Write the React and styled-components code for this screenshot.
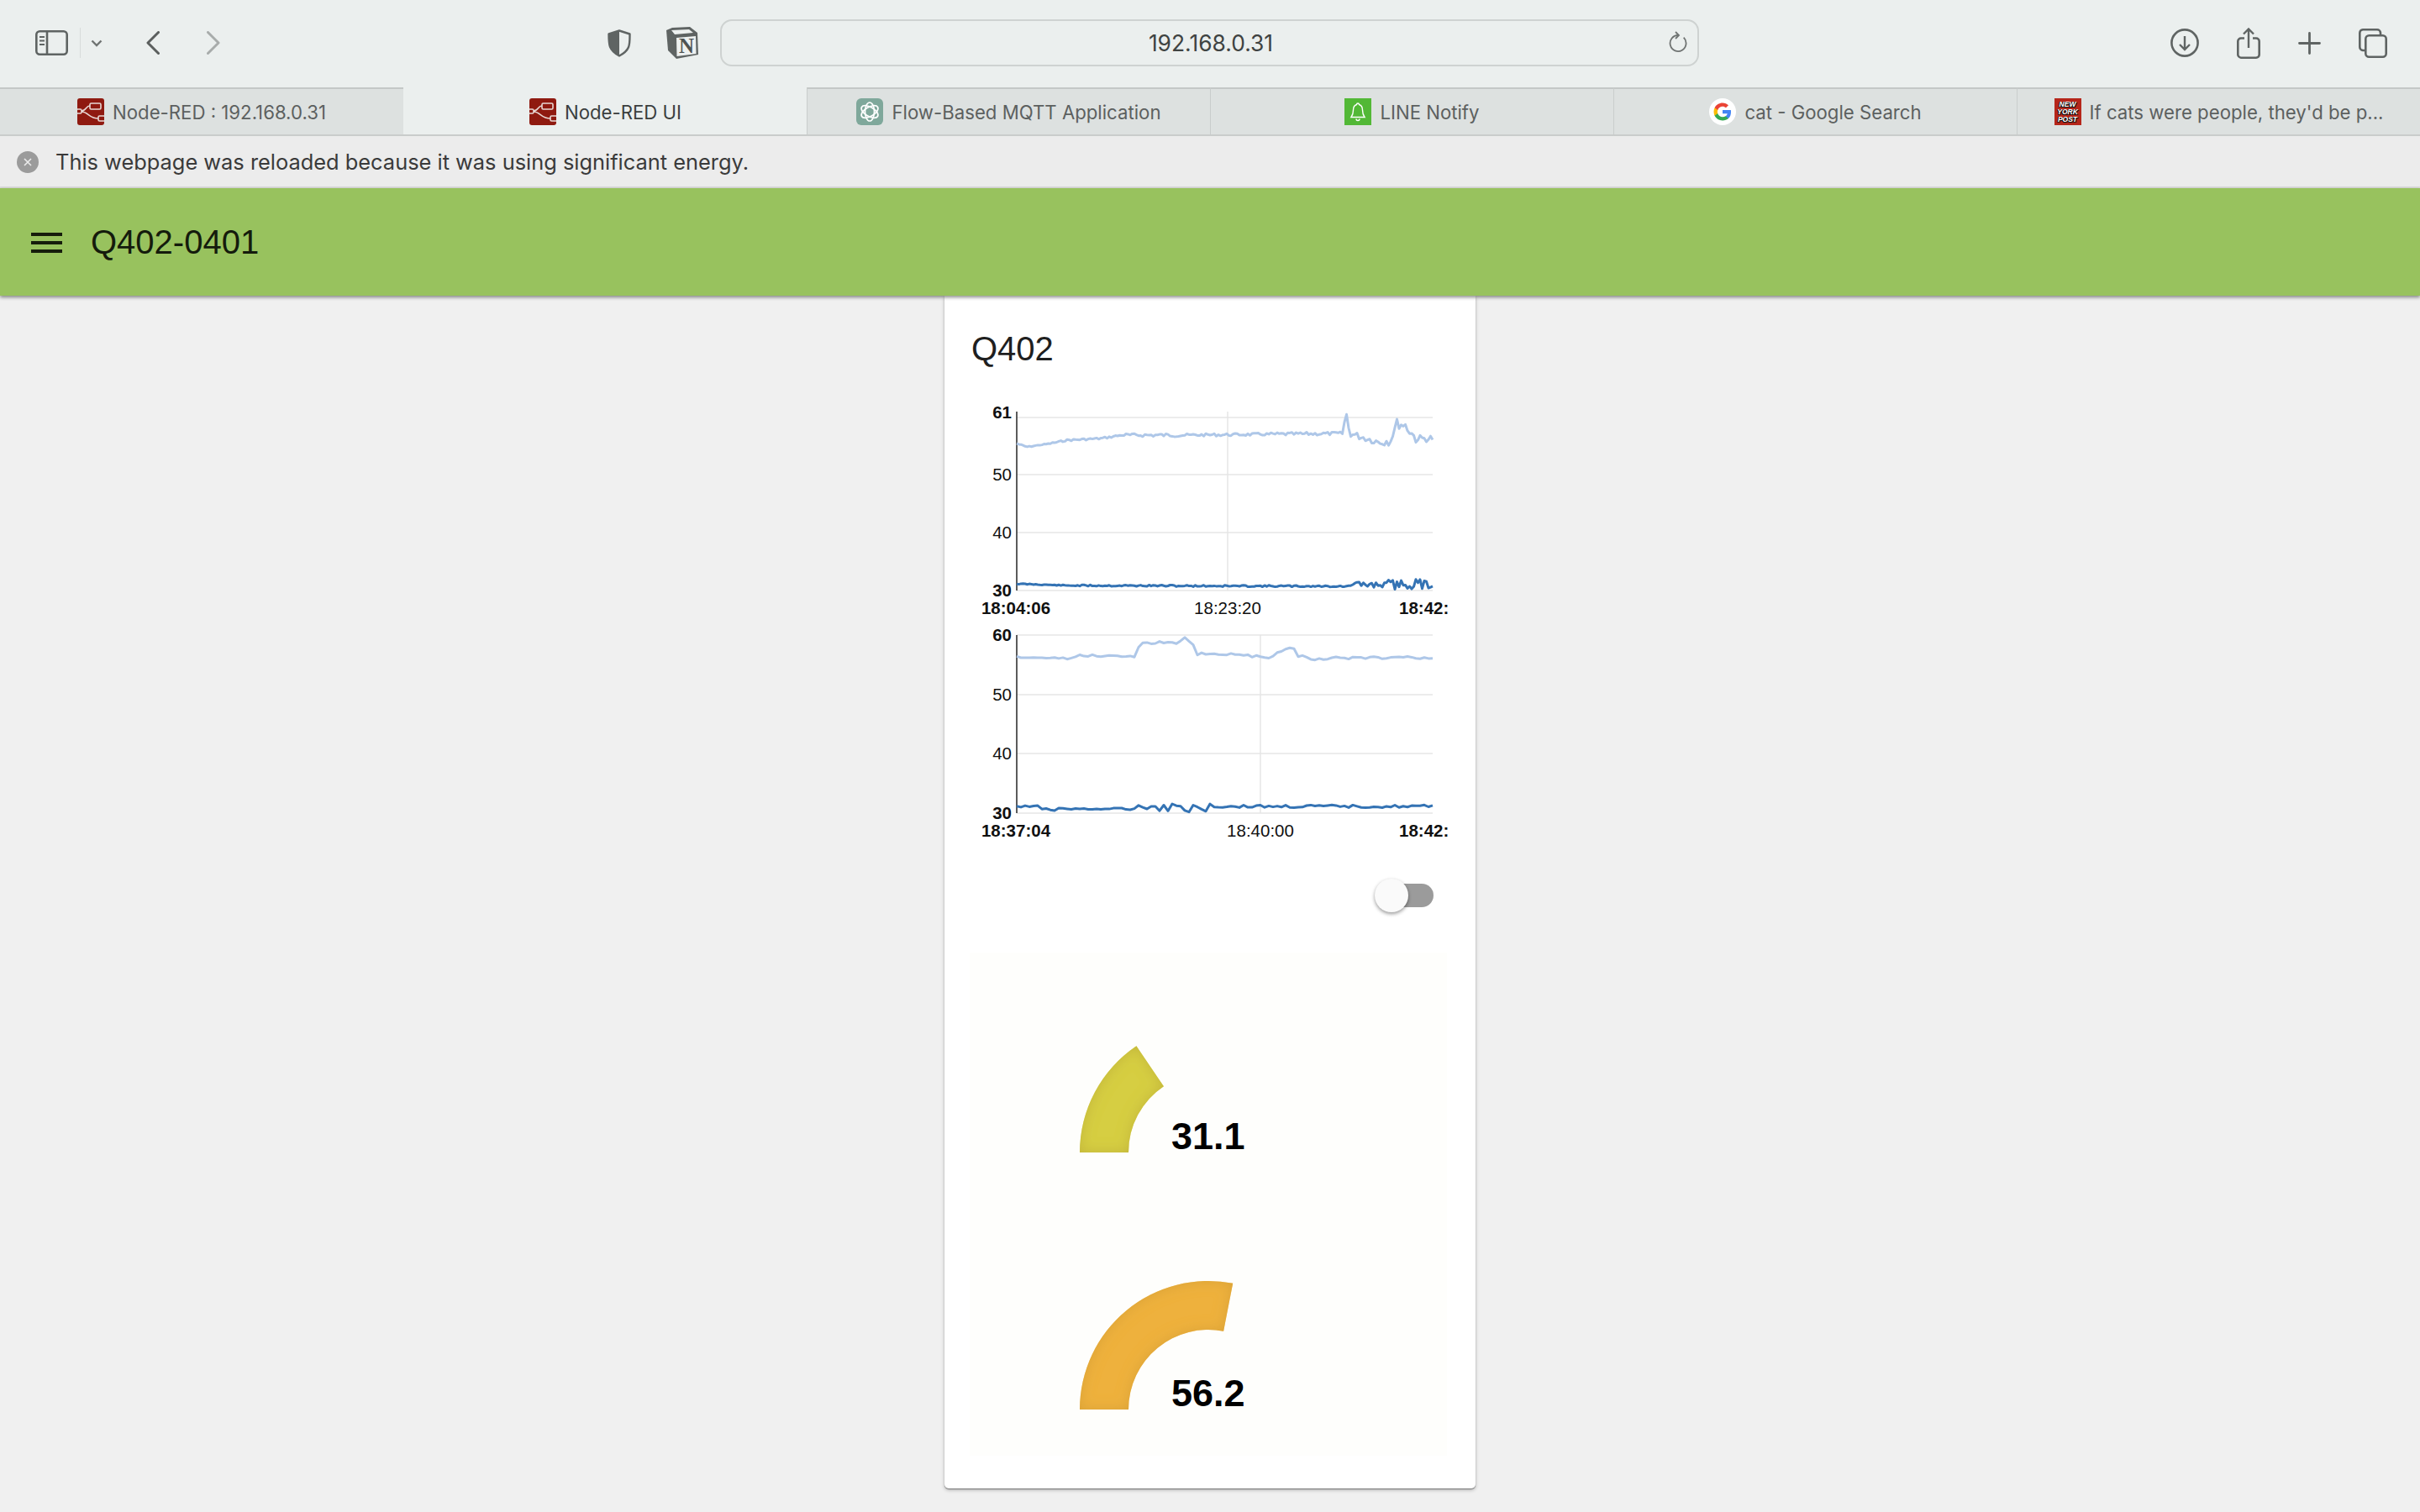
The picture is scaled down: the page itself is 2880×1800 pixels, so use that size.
import React from 'react'
import styled, { createGlobalStyle } from 'styled-components'

const GlobalStyle = createGlobalStyle`
  html, body { margin: 0; padding: 0; background: #f0f0f0; }
  body { font-family: "Liberation Sans", Arial, sans-serif; }
`

// the series are anchors plus seeded noise, the real data is far too long to write out
const noise = (seed) => {
  let s = seed
  return () => {
    s = (s * 9301 + 49297) % 233280
    return s / 233280 - 0.5
  }
}

const makeSeries = (anchors, step, amp, seed) => {
  const rnd = noise(seed)
  const out = []
  for (let x = 0; x <= 495; x += step) {
    const i = Math.max(0, anchors.findIndex((a, n) => anchors[n + 1] && x >= a[0] && x <= anchors[n + 1][0]))
    const [x0, y0, k = 1] = anchors[i]
    const [x1, y1] = anchors[i + 1]
    const y = y0 + ((y1 - y0) * (x - x0)) / (x1 - x0)
    out.push(`${x},${(y + rnd() * amp * k).toFixed(1)}`)
  }
  return out.join(' ')
}

const topSeries1 = makeSeries(
  [[0, 52, 0.3], [12, 56, 0.3], [40, 52, 0.5], [60, 48, 0.6], [100, 46, 0.6], [125, 42, 1], [200, 42, 0.8], [300, 41, 1], [388, 40, 2], [392, 14, 0], [396, 40, 2], [430, 50, 3], [445, 48, 2], [452, 28, 3], [462, 30, 3], [475, 46, 2], [495, 46, 1]],
  2.5, 4, 7
)
const lowSeries1 = makeSeries(
  [[0, 219, 0.5], [60, 221, 0.8], [395, 222, 0.4], [400, 220, 3], [440, 220, 5], [495, 219, 1]],
  2.5, 2.4, 11
)
const topSeries2 = makeSeries(
  [[0, 40, 0.5], [60, 42, 0.5], [76, 38, 1], [100, 38, 0.4], [142, 40, 0.4], [146, 24, 1], [199, 22, 3], [218, 35, 1], [300, 40, 1], [321, 30, 2], [350, 42, 1], [495, 40, 0.3]],
  5, 4, 23
)
const lowSeries2 = makeSeries(
  [[0, 218, 1], [50, 221, 0.4], [140, 221, 0], [144, 217, 2.2], [220, 220, 2.4], [230, 218, 0.7], [495, 218, 0.2]],
  5, 5, 31
)

const polar = (cx, cy, r, deg) => {
  const a = (deg * Math.PI) / 180
  return [cx - r * Math.cos(a), cy - r * Math.sin(a)]
}

const arcPath = (deg) => {
  const cx = 153, cy = 153, R = 153, r = 95
  const [ax, ay] = polar(cx, cy, R, 0)
  const [bx, by] = polar(cx, cy, R, deg)
  const [c, d] = polar(cx, cy, r, deg)
  const [e, f] = polar(cx, cy, r, 0)
  return `M${ax} ${ay}A${R} ${R} 0 0 1 ${bx.toFixed(1)} ${by.toFixed(1)}L${c.toFixed(1)} ${d.toFixed(1)}A${r} ${r} 0 0 0 ${e} ${f}Z`
}

const tabs = [
  { title: 'Node-RED : 192.168.0.31', icon: 'red' },
  { title: 'Node-RED UI', icon: 'red', active: true },
  { title: 'Flow-Based MQTT Application', icon: 'gpt' },
  { title: 'LINE Notify', icon: 'line' },
  { title: 'cat - Google Search', icon: 'google' },
  { title: "If cats were people, they'd be p...", icon: 'nyp' },
]

const TabIcon = ({ kind }) => {
  if (kind === 'red') {
    return (
      <Favicon viewBox="0 0 32 32">
        <rect width="32" height="32" rx="3" fill="#8f1a10" />
        <rect x="15" y="6" width="13" height="7" rx="1.5" fill="none" stroke="#e8d8d4" strokeWidth="1.6" />
        <rect x="-1" y="13" width="6" height="5" rx="1.5" fill="none" stroke="#e8d8d4" strokeWidth="1.6" />
        <rect x="25" y="21" width="8" height="6" rx="1.5" fill="none" stroke="#e8d8d4" strokeWidth="1.6" />
        <path d="M5 15c6 0 5-6 10-6M5 16c8 0 9 8 20 8" fill="none" stroke="#e8d8d4" strokeWidth="1.6" />
      </Favicon>
    )
  }
  if (kind === 'gpt') {
    return (
      <Favicon viewBox="0 0 32 32">
        <rect width="32" height="32" rx="6" fill="#7fa89b" />
        <g fill="none" stroke="#fff" strokeWidth="1.7">
          <ellipse cx="16" cy="16" rx="5.5" ry="11" />
          <ellipse cx="16" cy="16" rx="5.5" ry="11" transform="rotate(60 16 16)" />
          <ellipse cx="16" cy="16" rx="5.5" ry="11" transform="rotate(120 16 16)" />
        </g>
      </Favicon>
    )
  }
  if (kind === 'line') {
    return (
      <Favicon viewBox="0 0 32 32">
        <rect width="32" height="32" fill="#52b836" />
        <path d="M16 6c-1 0-1.5.6-1.5 1.5C11.5 8.5 10.500 11 10.500 14c0 4-1 6.500-2.500 8.500h16c-1.500-2-2.500-4.500-2.500-8.500 0-3-1-5.500-4-6.500C17.500 6.600 17 6 16 6z" fill="none" stroke="#fff" strokeWidth="1.4" />
        <path d="M14 24.500a2 2 0 0 0 4 0" fill="none" stroke="#fff" strokeWidth="1.4" />
      </Favicon>
    )
  }
  if (kind === 'google') {
    return (
      <Favicon viewBox="0 0 32 32">
        <circle cx="16" cy="16" r="16" fill="#fff" />
        <path d="M26 16.300c0-.8-.1-1.500-.2-2.200H16v4.100h5.700c-.3 1.300-1 2.400-2.200 3.200v2.700h3.500c2-1.900 3-4.600 3-7.800z" fill="#4285f4" />
        <path d="M16 26.500c2.800 0 5.200-.9 7-2.500l-3.500-2.700c-.9.600-2.100 1-3.500 1-2.700 0-5-1.800-5.800-4.300H6.600v2.800c1.700 3.400 5.300 5.700 9.400 5.700z" fill="#34a853" />
        <path d="M10.200 18c-.2-.6-.3-1.300-.3-2s.1-1.400.3-2v-2.800H6.600C5.900 12.600 5.500 14.300 5.500 16s.4 3.400 1.100 4.800z" fill="#fbbc05" />
        <path d="M16 9.700c1.500 0 2.900.5 4 1.600l3-3c-1.800-1.700-4.200-2.800-7-2.800-4.100 0-7.700 2.300-9.400 5.700l3.600 2.800c.8-2.500 3.100-4.300 5.800-4.300z" fill="#ea4335" />
      </Favicon>
    )
  }
  return (
    <NypBadge>
      <span>NEW</span>
      <span>YORK</span>
      <span>POST</span>
    </NypBadge>
  )
}

const LineChart = ({ maxLabel, maxShift, grid, vx, startLabel, midLabel, top, low }) => (
  <ChartBox>
    <svg width="560" height="266" viewBox="0 0 560 266">
      <g stroke="#e6e6e6" strokeWidth="1.5">
        {grid.lines.map((y) => (
          <line key={y} x1="40" x2="535" y1={y} y2={y} />
        ))}
        <line x1={vx} x2={vx} y1={grid.top} y2={grid.bottom} />
      </g>
      <line x1="40" x2="40" y1={grid.top} y2={grid.bottom} stroke="#333" strokeWidth="1.6" />
      <g transform="translate(40 0)" fill="none" strokeLinejoin="round">
        <polyline points={top} stroke="#aec7e8" strokeWidth="3" />
        <polyline points={low} stroke="#3473b4" strokeWidth="3" />
      </g>
      <g fontFamily="Liberation Sans" fontSize="20.5" fill="#111" textAnchor="end">
        <text x="34" y={grid.lines[0] + maxShift} fontWeight="700">{maxLabel}</text>
        <text x="34" y={grid.lines[1] + 7}>50</text>
        <text x="34" y={grid.lines[2] + 7}>40</text>
        <text x="34" y={grid.bottom + 7} fontWeight="700">30</text>
      </g>
      <g fontFamily="Liberation Sans" fontSize="20.5" fill="#111" textAnchor="middle">
        <text x="39" y={grid.bottom + 28} fontWeight="700">{startLabel}</text>
        <text x={vx} y={grid.bottom + 28}>{midLabel}</text>
        <text x="495" y={grid.bottom + 28} fontWeight="700" textAnchor="start">18:42:</text>
      </g>
    </svg>
  </ChartBox>
)

const Gauge = ({ deg, color, edge, id, value, offset }) => (
  <GaugeRow $offset={offset}>
    <svg width="306" height="154" viewBox="0 0 306 154">
      <defs>
        <filter id={id} x="-5%" y="-5%" width="110%" height="110%">
          <feGaussianBlur in="SourceAlpha" stdDeviation="8" result="blur" />
          <feComposite in="SourceAlpha" in2="blur" operator="out" result="rim" />
          <feFlood floodColor={edge} />
          <feComposite in2="rim" operator="in" result="shade" />
          <feMerge>
            <feMergeNode in="SourceGraphic" />
            <feMergeNode in="shade" />
          </feMerge>
        </filter>
      </defs>
      <path d={arcPath(deg)} fill={color} filter={`url(#${id})`} />
    </svg>
    <GaugeValue>{value}</GaugeValue>
  </GaugeRow>
)

export default function App() {
  return (
    <Page>
      <GlobalStyle />
      <Toolbar>
        <LeftTools>
          <SidebarIcon width="39" height="30" viewBox="0 0 39 30" fill="none" stroke="#5f6463" strokeWidth="2.6">
            <rect x="1.3" y="1.3" width="36.4" height="27.4" rx="4" />
            <line x1="14" x2="14" y1="1" y2="29" />
            <path d="M5 8h6M5 12.500h6M5 17h6" strokeWidth="2" />
          </SidebarIcon>
          <Divider />
          <SmallChevron width="14" height="9" viewBox="0 0 14 9" fill="none" stroke="#6f7372" strokeWidth="2.4"><path d="M1.500 1.500L7 7l5.500-5.500" /></SmallChevron>
          <NavIcon viewBox="0 0 16 28" stroke="#5b5f5e" $gap={52}><path d="M14.500 1.500L2 14l12.500 12.500" /></NavIcon>
          <NavIcon viewBox="0 0 16 28" stroke="#a8acab" $gap={56}><path d="M1.500 1.500L14 14 1.500 26.500" /></NavIcon>
        </LeftTools>
        <MidTools>
          <svg width="28" height="33" viewBox="0 0 28 33">
            <path d="M14 1.500l12.500 4c0 13 .5 19-12.500 26C1.500 24.500 1.500 18.500 1.500 5.500z" fill="none" stroke="#5f6463" strokeWidth="2.4" strokeLinejoin="round" />
            <path d="M14 1.500l-12.500 4c0 13 0 19 12.500 26z" fill="#5f6463" />
          </svg>
          <svg width="38" height="38" viewBox="0 0 38 38">
            <path d="M7 1l21-1 9 7 1 26-26 5-10-10L0 4z" fill="#5f6463" />
            <path d="M6 4l21-1 5 4-22 2zM12 13l23-2 .5 21-23 3z" fill="#eef1f0" />
            <NotionN x="24" y="31">N</NotionN>
          </svg>
        </MidTools>
        <AddressBar>
          <AddressText>192.168.0.31</AddressText>
          <Reload viewBox="0 0 22 25" fill="none" stroke="#6f7372" strokeWidth="1.8">
            <path d="M17.700 7.700A9.500 9.500 0 1 1 11 5" />
            <path d="M8 1l4 4-4 4" />
          </Reload>
        </AddressBar>
        <RightTools>
          <svg width="34" height="34" viewBox="0 0 34 34" fill="none" stroke="#5f6463" strokeWidth="2.6">
            <circle cx="17" cy="17" r="15.600" />
            <path d="M17 9v16M11 19l6 6 6-6" strokeWidth="2.400" />
          </svg>
          <svg width="28" height="37" viewBox="0 0 28 37" fill="none" stroke="#5f6463" strokeWidth="2.6">
            <path d="M9 12.500H5a3.700 3.700 0 0 0-3.700 3.700v15.100A4 4 0 0 0 5 35.700h18a3.700 3.700 0 0 0 3.700-3.700V16.200a3.700 3.700 0 0 0-3.700-3.700h-4" />
            <path d="M14 24V2M8 7.500L14 1.500l6 6" strokeWidth="2.400" />
          </svg>
          <svg width="27" height="27" viewBox="0 0 27 27" stroke="#5f6463" strokeWidth="2.8" strokeLinecap="round"><path d="M13.500 1.500v24M1.500 13.500h24" /></svg>
          <svg width="34" height="35" viewBox="0 0 34 35" fill="none" stroke="#5f6463" strokeWidth="2.6">
            <path d="M7 26H5a4 4 0 0 1-3.700-4V5A4 4 0 0 1 5 1.300h17A4 4 0 0 1 26 5v2" />
            <rect x="8.300" y="8.300" width="24.400" height="25.400" rx="4" />
          </svg>
        </RightTools>
      </Toolbar>
      <TabStrip>
        {tabs.map((t) => (
          <Tab key={t.title} $active={t.active}>
            <TabIcon kind={t.icon} />
            <TabTitle $active={t.active}>{t.title}</TabTitle>
          </Tab>
        ))}
      </TabStrip>
      <NoticeBar>
        <CloseDot>
          <svg width="10" height="10" viewBox="0 0 10 10" stroke="#ececec" strokeWidth="1.6"><path d="M1 1l8 8M9 1l-8 8" /></svg>
        </CloseDot>
        <NoticeText>This webpage was reloaded because it was using significant energy.</NoticeText>
      </NoticeBar>
      <AppBar>
        <Burger>
          <i /><i /><i />
        </Burger>
        <AppTitle>Q402-0401</AppTitle>
      </AppBar>
      <Content>
        <Card>
          <CardTitle>Q402</CardTitle>
          <LineChart
            maxLabel="61"
            maxShift={1}
            grid={{ top: 14, bottom: 227, lines: [21, 89, 158, 227] }}
            vx={291}
            startLabel="18:04:06"
            midLabel="18:23:20"
            top={topSeries1}
            low={lowSeries1}
          />
          <LineChart
            maxLabel="60"
            maxShift={7}
            grid={{ top: 14, bottom: 226, lines: [14, 85, 155, 226] }}
            vx={330}
            startLabel="18:37:04"
            midLabel="18:40:00"
            top={topSeries2}
            low={lowSeries2}
          />
          <SwitchRow>
            <Switch>
              <SwitchThumb />
            </Switch>
          </SwitchRow>
          <GaugeArea>
            <Gauge id="g1" deg={56} color="#d6ce42" edge="#c2b53c" value="31.1" offset={85} />
            <Gauge id="g2" deg={101} color="#eeb13c" edge="#d9a238" value="56.2" offset={152} />
          </GaugeArea>
        </Card>
      </Content>
    </Page>
  )
}

const Page = styled.div`
  width: 2880px;
  height: 1800px;
  overflow: hidden;
  display: flex;
  flex-direction: column;
  background: #f0f0f0;
`

const Toolbar = styled.div`
  height: 104px;
  flex: none;
  display: flex;
  align-items: center;
  background: #ebefee;
  padding-bottom: 2px;
  box-sizing: border-box;
`

const LeftTools = styled.div`
  width: 723px;
  flex: none;
  display: flex;
  align-items: center;
  padding-left: 42px;
  box-sizing: border-box;
`

const SidebarIcon = styled.svg`
  flex: none;
`

const Divider = styled.span`
  width: 1px;
  height: 36px;
  margin-left: 14px;
  background: #d8dcdb;
`

const SmallChevron = styled.svg`
  margin-left: 12px;
`

const NavIcon = styled.svg`
  width: 16px;
  height: 28px;
  margin-left: ${(p) => p.$gap}px;
  fill: none;
  stroke-width: 3;
  stroke-linecap: round;
  stroke-linejoin: round;
`

const MidTools = styled.div`
  width: 134px;
  flex: none;
  display: flex;
  align-items: center;
  gap: 42px;
`

const NotionN = styled.text`
  font-family: "Liberation Serif", serif;
  font-weight: 700;
  font-size: 25px;
  fill: #4f5352;
  text-anchor: middle;
`

const AddressBar = styled.div`
  width: 1165px;
  height: 56px;
  flex: none;
  position: relative;
  display: flex;
  align-items: center;
  justify-content: center;
  box-sizing: border-box;
  border: 2px solid #ced2d1;
  border-radius: 14px;
  padding-left: 3px;
`

const AddressText = styled.span`
  font-family: Inter, sans-serif;
  font-size: 26.4px;
  color: #3f4342;
`

const Reload = styled.svg`
  position: absolute;
  right: 12px;
  top: 12px;
  width: 22px;
  height: 25px;
`

const RightTools = styled.div`
  flex: 1;
  display: flex;
  align-items: center;
  justify-content: flex-end;
  padding-right: 39px;
  gap: 45px;
`

const TabStrip = styled.div`
  height: 58px;
  flex: none;
  display: grid;
  grid-template-columns: repeat(6, 1fr);
  box-sizing: border-box;
  border-bottom: 2px solid #c9cccb;
`

const Tab = styled.div`
  display: flex;
  align-items: center;
  justify-content: center;
  gap: 10px;
  padding-top: ${(p) => (p.$active ? '2px' : '0')};
  background: ${(p) => (p.$active ? '#ebefee' : '#dde1e0')};
  border-top: ${(p) => (p.$active ? '0' : '2px solid #c4c8c7')};
  border-left: 1px solid ${(p) => (p.$active ? 'transparent' : '#c9cdcc')};
  box-sizing: border-box;
  &:first-child { border-left: 0; }
`

const Favicon = styled.svg`
  width: 32px;
  height: 32px;
  flex: none;
`

const NypBadge = styled.div`
  width: 32px;
  height: 32px;
  flex: none;
  background: #b5261a;
  display: flex;
  flex-direction: column;
  align-items: center;
  justify-content: center;
  font-family: "Liberation Sans", sans-serif;
  font-weight: 700;
  font-style: italic;
  font-size: 8.5px;
  line-height: 9px;
  color: #fff;
  text-shadow: -1px 1px 0 #111, 1px 1px 0 #111, -1px 0 0 #111;
`

const TabTitle = styled.span`
  font-family: Inter, sans-serif;
  font-size: 22.2px;
  color: ${(p) => (p.$active ? '#3a3e3d' : '#5c605f')};
`

const NoticeBar = styled.div`
  height: 62px;
  flex: none;
  display: flex;
  align-items: center;
  gap: 20px;
  padding: 1px 0 0 20px;
  box-sizing: border-box;
  background: #ececec;
  border-bottom: 2px solid #dcdcdc;
`

const CloseDot = styled.span`
  width: 26px;
  height: 26px;
  border-radius: 50%;
  background: #9b9b9b;
  display: flex;
  align-items: center;
  justify-content: center;
`

const NoticeText = styled.span`
  font-family: Inter, sans-serif;
  font-size: 25.4px;
  color: #3a3a3a;
`

const AppBar = styled.header`
  height: 128px;
  flex: none;
  display: flex;
  align-items: center;
  background: #98c25e;
  box-shadow: 0 2px 4px rgba(0, 0, 0, 0.45);
  position: relative;
  z-index: 2;
`

const Burger = styled.div`
  width: 37px;
  height: 24px;
  margin: 2px 0 0 37px;
  display: flex;
  flex-direction: column;
  justify-content: space-between;
  i {
    display: block;
    height: 4px;
    background: #161d0c;
  }
`

const AppTitle = styled.h1`
  margin: 0 0 0 34px;
  font-weight: 400;
  font-size: 40px;
  color: #141b0c;
`

const Content = styled.main`
  flex: 1;
  display: flex;
  justify-content: center;
`

const Card = styled.section`
  width: 632px;
  height: 1420px;
  background: #fff;
  border-radius: 0 0 5px 5px;
  box-shadow: 0 1px 1px rgba(0, 0, 0, 0.4), 0 2px 4px rgba(0, 0, 0, 0.25);
  box-sizing: border-box;
  padding: 40px 0 0 32px;
`

const CardTitle = styled.h2`
  margin: 0 0 38px;
  font-weight: 400;
  font-size: 40px;
  line-height: 46px;
  color: #1f1f1f;
`

const ChartBox = styled.div`
  margin-left: 14px;
  height: 266px;
  svg { display: block; overflow: visible; }
`

const SwitchRow = styled.div`
  display: flex;
  justify-content: flex-end;
  padding-right: 50px;
  margin-top: 44px;
`

const Switch = styled.div`
  width: 56px;
  height: 28px;
  background: #9b9b9b;
  border-radius: 14px;
  position: relative;
`

const SwitchThumb = styled.span`
  position: absolute;
  left: -14px;
  top: -6px;
  width: 40px;
  height: 40px;
  border-radius: 50%;
  background: #fafafa;
  box-shadow: 0 2px 4px rgba(0, 0, 0, 0.4);
`

const GaugeArea = styled.div`
  background: #fefefc;
  margin: 54px 34px 0 -2px;
  height: 599px;
  overflow: hidden;
  display: flex;
  flex-direction: column;
`

const GaugeRow = styled.div`
  position: relative;
  margin-left: 131px;
  margin-top: ${(p) => p.$offset}px;
  height: 154px;
  flex: none;
  svg { display: block; }
`

const GaugeValue = styled.span`
  position: absolute;
  left: 109px;
  bottom: -2px;
  font-weight: 700;
  font-size: 45px;
  line-height: 45px;
  color: #000;
`
